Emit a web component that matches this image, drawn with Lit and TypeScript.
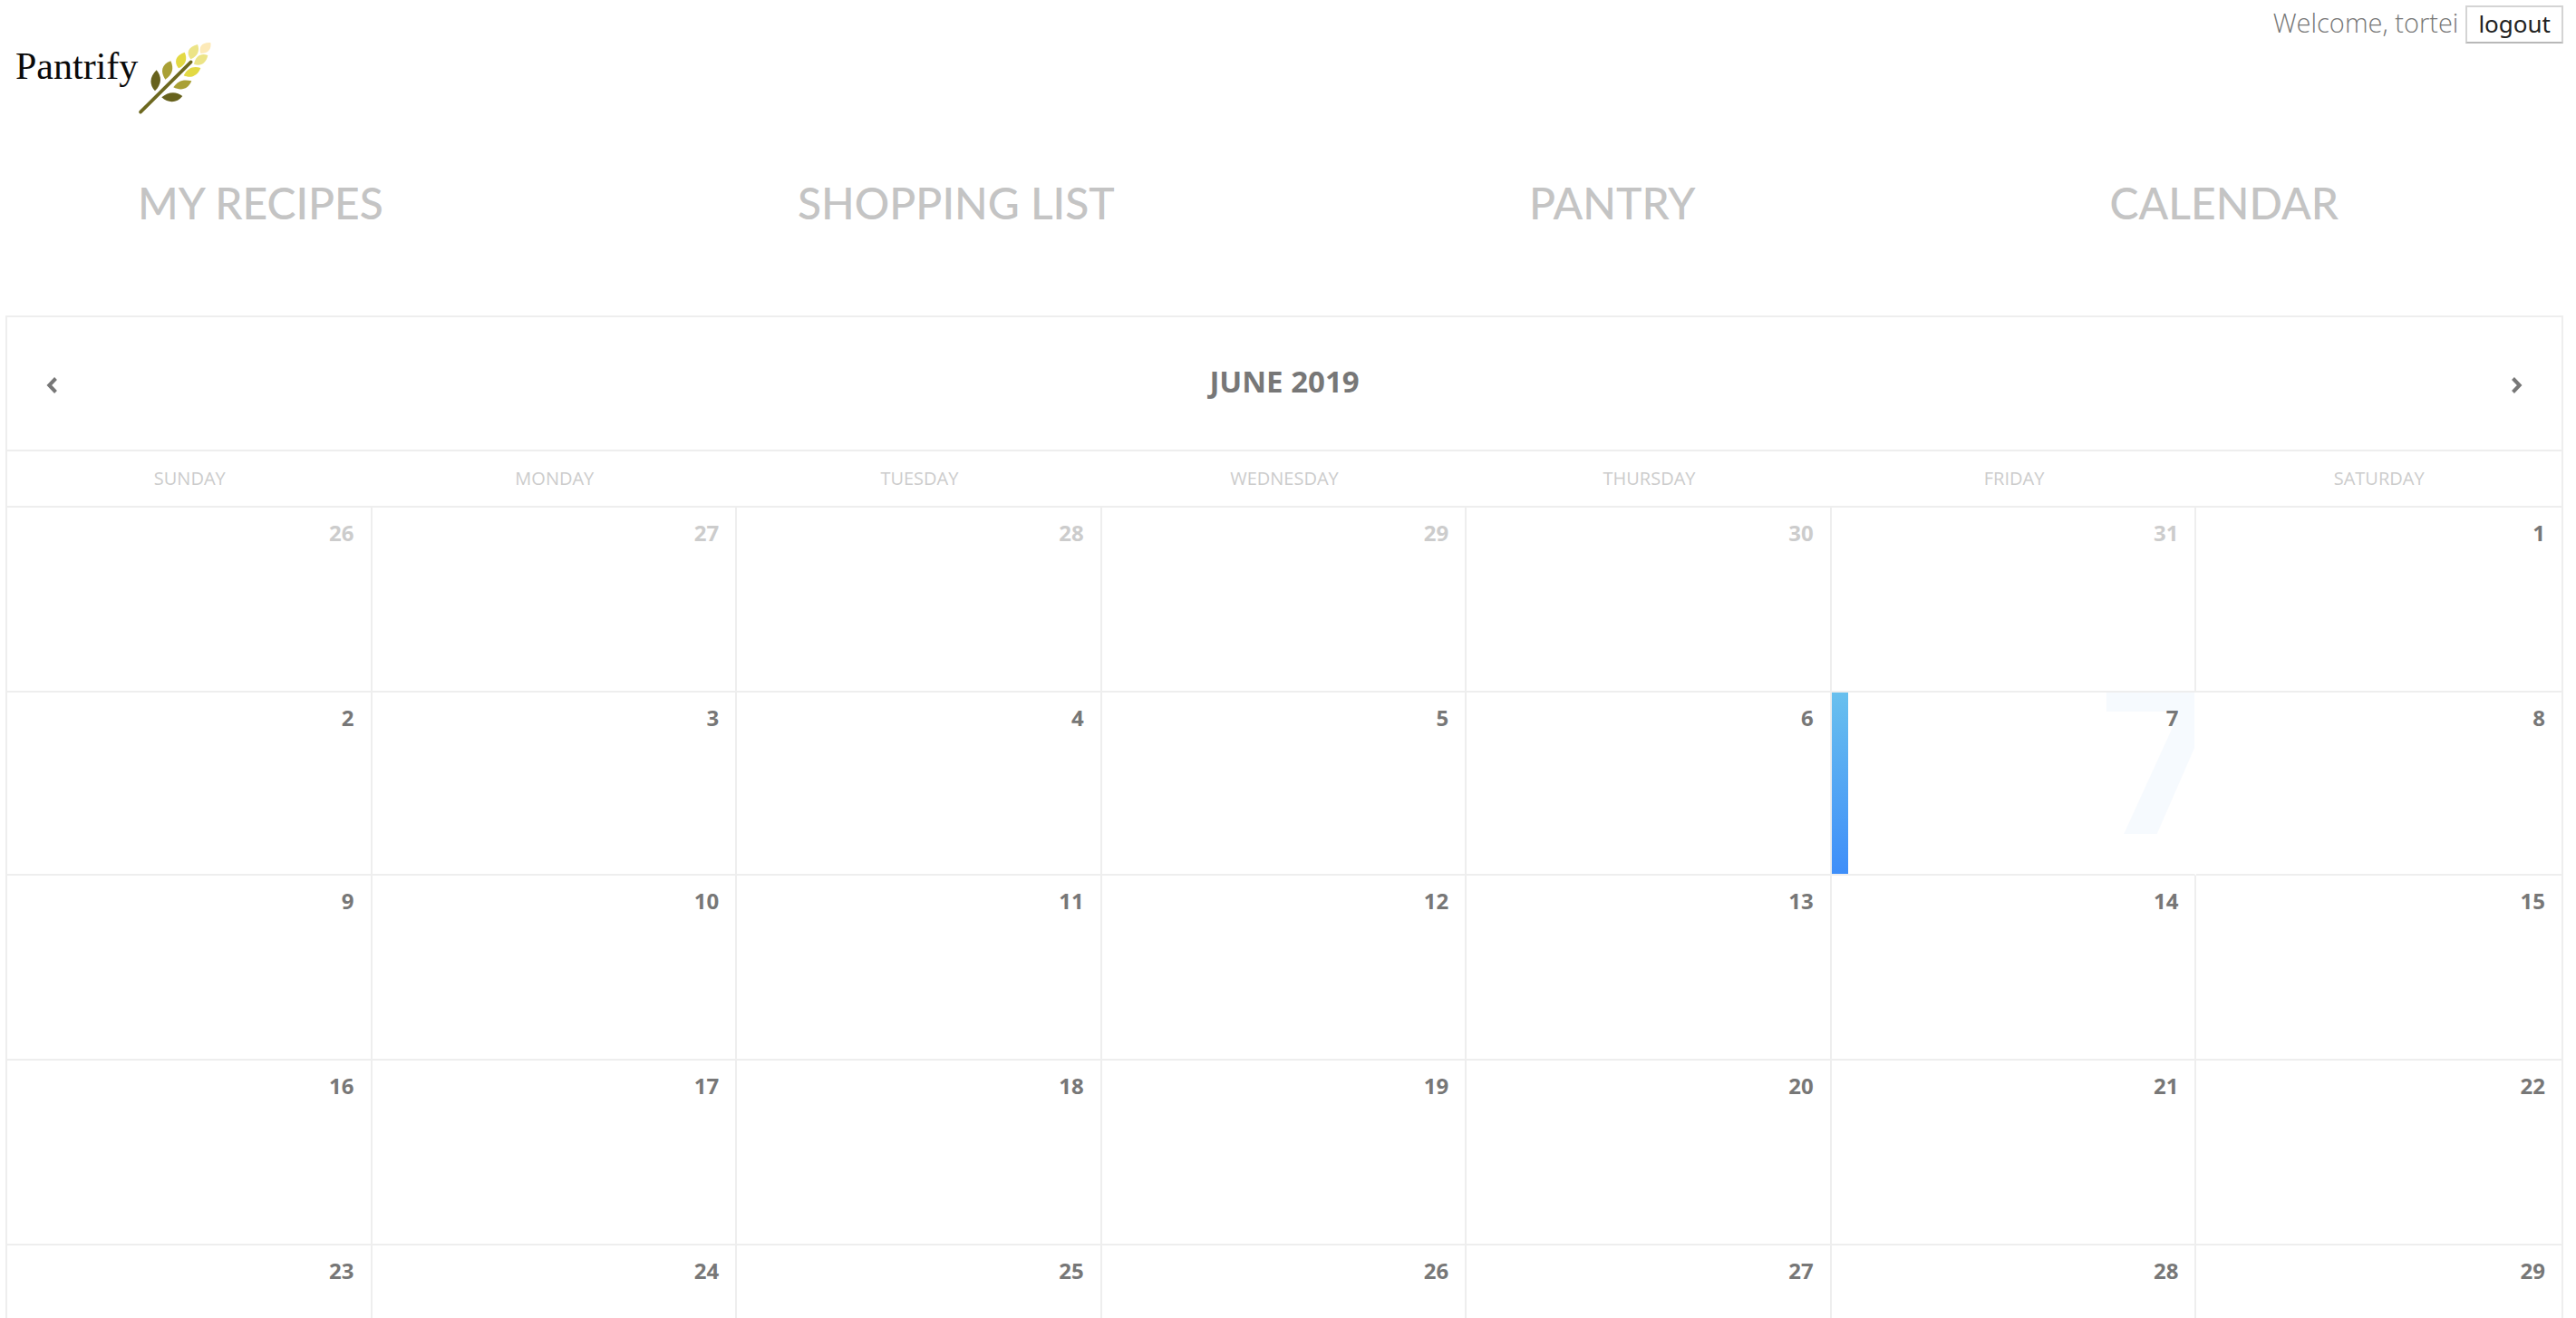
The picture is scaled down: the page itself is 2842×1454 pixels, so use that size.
import { LitElement, html, css } from "lit";
import { customElement, property, state } from "lit/decorators.js";
import { classMap } from "lit/directives/class-map.js";

const WEEKDAYS = ["Sunday", "Monday", "Tuesday", "Wednesday", "Thursday", "Friday", "Saturday"];
const MONTHS = [
  "January", "February", "March", "April", "May", "June",
  "July", "August", "September", "October", "November", "December",
];

@customElement("wheat-logo")
class WheatLogo extends LitElement {
  static styles = css`
    :host { display: block; }
    .brand { display: flex; color: #0a0a0a; text-decoration: none; }
    .name { font: 42px/44px "Liberation Serif", serif; padding-top: 6px; }
    .wheat { width: 82px; height: 82px; }
  `;

  render() {
    return html`
      <a class="brand" href="#home">
        <span class="name">Pantrify</span>
        <svg class="wheat" viewBox="30 30 246 246" aria-hidden="true">
          <path d="M39 266L206 100" stroke="#6d681f" stroke-width="11" stroke-linecap="round" />
          <path d="M92 127C68 150 68 176 87 196C110 174 110 148 92 127Z" fill="#67621d" />
          <path d="M139 97C108 108 104 134 121 158C146 142 150 120 139 97Z" fill="#a9a035" />
          <path d="M185 68C154 78 149 100 165 121C190 110 195 88 185 68Z" fill="#e3d943" />
          <path d="M228 42C196 50 189 70 205 91C229 81 236 62 228 42Z" fill="#ece487" />
          <path d="M271 36C241 34 231 50 238 72C262 72 275 58 271 36Z" fill="#fdeab8" />
          <path d="M262 78C238 70 222 80 216 107C236 116 256 106 262 78Z" fill="#ece487" />
          <path d="M238 120C212 112 194 122 182 145C206 156 228 146 238 120Z" fill="#e3d943" />
          <path d="M208 163C182 156 162 162 148 184C172 196 196 192 208 163Z" fill="#a9a035" />
          <path d="M178 213C158 196 130 198 109 217C132 238 160 236 178 213Z" fill="#67621d" />
        </svg>
      </a>
    `;
  }
}

@customElement("month-calendar")
class MonthCalendar extends LitElement {
  @property({ type: Number }) year = 2019;
  @property({ type: Number }) month = 5;
  @property({ type: Number }) selected = 7;

  static styles = css`
    :host { display: block; border: 2px solid #eee; background: #fff; color: #777; }
    .header {
      display: flex; align-items: center; justify-content: space-between; box-sizing: border-box;
      padding: 4px 32px 0; height: 148px; border-bottom: 2px solid #eee;
    }
    .title {
      margin: 0; padding-bottom: 8px; font-size: 33px; line-height: 46px; font-weight: 700;
      text-transform: uppercase;
    }
    .step {
      display: flex; padding: 0; border: 0; background: none; color: inherit; cursor: pointer;
    }
    .chevron { width: 36px; height: 36px; fill: none; stroke: currentColor; stroke-width: 4; }
    .grid { width: 100%; border-collapse: separate; border-spacing: 0; table-layout: fixed; }
    .weekday {
      height: 60px; padding: 0; border-bottom: 2px solid #eee;
      font-size: 20px; line-height: 28px; font-weight: 400; color: #ccc; text-transform: uppercase;
    }
    .day {
      position: relative; box-sizing: border-box; height: 204px; padding: 16px 18px 0 0; overflow: hidden;
      border-right: 2px solid #eee; border-bottom: 2px solid #eee;
      font-size: 24px; line-height: 24px; font-weight: 700; text-align: right; vertical-align: top;
    }
    .day:last-child { border-right: 0; }
    .current .day { height: 202px; }
    .outside { color: #ccc; }
    .selected { border-right-color: transparent; padding: 0; }
    .inner {
      display: block; position: relative; overflow: hidden; box-sizing: border-box;
      height: 200px; padding: 16px 18px 0 0;
    }
    .inner::before {
      content: ""; position: absolute; top: 0; bottom: 0; left: 0; width: 18px;
      background: linear-gradient(#69c0ee, #3e8ef9);
    }
    .ghost {
      position: absolute; top: -48px; right: -28px; font-size: 230px; line-height: 230px;
      color: #3e8ef9; opacity: 0.04;
    }
  `;

  private get weeks(): Date[][] {
    const cursor = new Date(this.year, this.month, 1);
    cursor.setDate(1 - cursor.getDay());
    const weeks: Date[][] = [];
    do {
      const week: Date[] = [];
      for (let i = 0; i < 7; i++) {
        week.push(new Date(cursor));
        cursor.setDate(cursor.getDate() + 1);
      }
      weeks.push(week);
    } while (cursor.getMonth() === this.month);
    return weeks;
  }

  private step(by: number) {
    const next = new Date(this.year, this.month + by, 1);
    this.year = next.getFullYear();
    this.month = next.getMonth();
  }

  private renderDay(date: Date) {
    const outside = date.getMonth() !== this.month;
    const selected = !outside && date.getDate() === this.selected;
    return html`
      <td class=${classMap({ day: true, outside, selected })}>
        ${selected
          ? html`<span class="inner">${date.getDate()}<span class="ghost" aria-hidden="true">${date.getDate()}</span></span>`
          : date.getDate()}
      </td>
    `;
  }

  render() {
    return html`
      <div class="header">
        <button class="step" aria-label="Previous month" @click=${() => this.step(-1)}>
          <svg class="chevron" viewBox="0 0 36 36"><path d="M21.500 10.500L14.300 18L21.500 25.500" /></svg>
        </button>
        <h2 class="title">${MONTHS[this.month]} ${this.year}</h2>
        <button class="step" aria-label="Next month" @click=${() => this.step(1)}>
          <svg class="chevron" viewBox="0 0 36 36"><path d="M14.500 10.500L21.700 18L14.500 25.500" /></svg>
        </button>
      </div>
      <table class="grid">
        <thead>
          <tr>${WEEKDAYS.map((name) => html`<th class="weekday" scope="col">${name}</th>`)}</tr>
        </thead>
        <tbody>
          ${this.weeks.map((week) => {
            const current = week.some((d) => d.getMonth() === this.month && d.getDate() === this.selected);
            return html`<tr class=${classMap({ current })}>${week.map((d) => this.renderDay(d))}</tr>`;
          })}
        </tbody>
      </table>
    `;
  }
}

@customElement("app-root")
class AppRoot extends LitElement {
  @state() private user = "tortei";

  static styles = css`
    :host {
      display: block; height: 100vh; overflow: hidden; background: #fff;
      font-family: "Open Sans", "Noto Sans", sans-serif;
    }
    .top { display: flex; justify-content: space-between; align-items: flex-start; padding: 6px 14px 0 17px; }
    .brand { padding-top: 39px; }
    .account { display: flex; align-items: flex-start; gap: 8px; font-size: 29px; line-height: 38px; }
    .welcome { font-weight: 300; color: #777; }
    .logout {
      height: 42px; padding: 0 12px 3px; border: 2px solid #d4d4d4; border-bottom-color: #b8b8b8;
      background: #fff; color: #222; font: 26px/34px "Noto Sans", sans-serif; cursor: pointer;
    }
    .nav { display: flex; justify-content: space-between; padding: 62px 262px 89px 152px; }
    .link {
      font: 500 48px/70px Lato, "Noto Sans", sans-serif;
      color: #c4c4c4; text-decoration: none; text-transform: uppercase;
    }
    .calendar { margin: 0 14px 0 6px; }
  `;

  render() {
    return html`
      <header class="top">
        <wheat-logo class="brand"></wheat-logo>
        <div class="account">
          <span class="welcome">Welcome, ${this.user}</span>
          <button class="logout">logout</button>
        </div>
      </header>
      <nav class="nav">
        ${["My Recipes", "Shopping List", "Pantry", "Calendar"].map(
          (name) => html`<a class="link" href="#${name.toLowerCase().replace(" ", "-")}">${name}</a>`
        )}
      </nav>
      <month-calendar class="calendar"></month-calendar>
    `;
  }
}
